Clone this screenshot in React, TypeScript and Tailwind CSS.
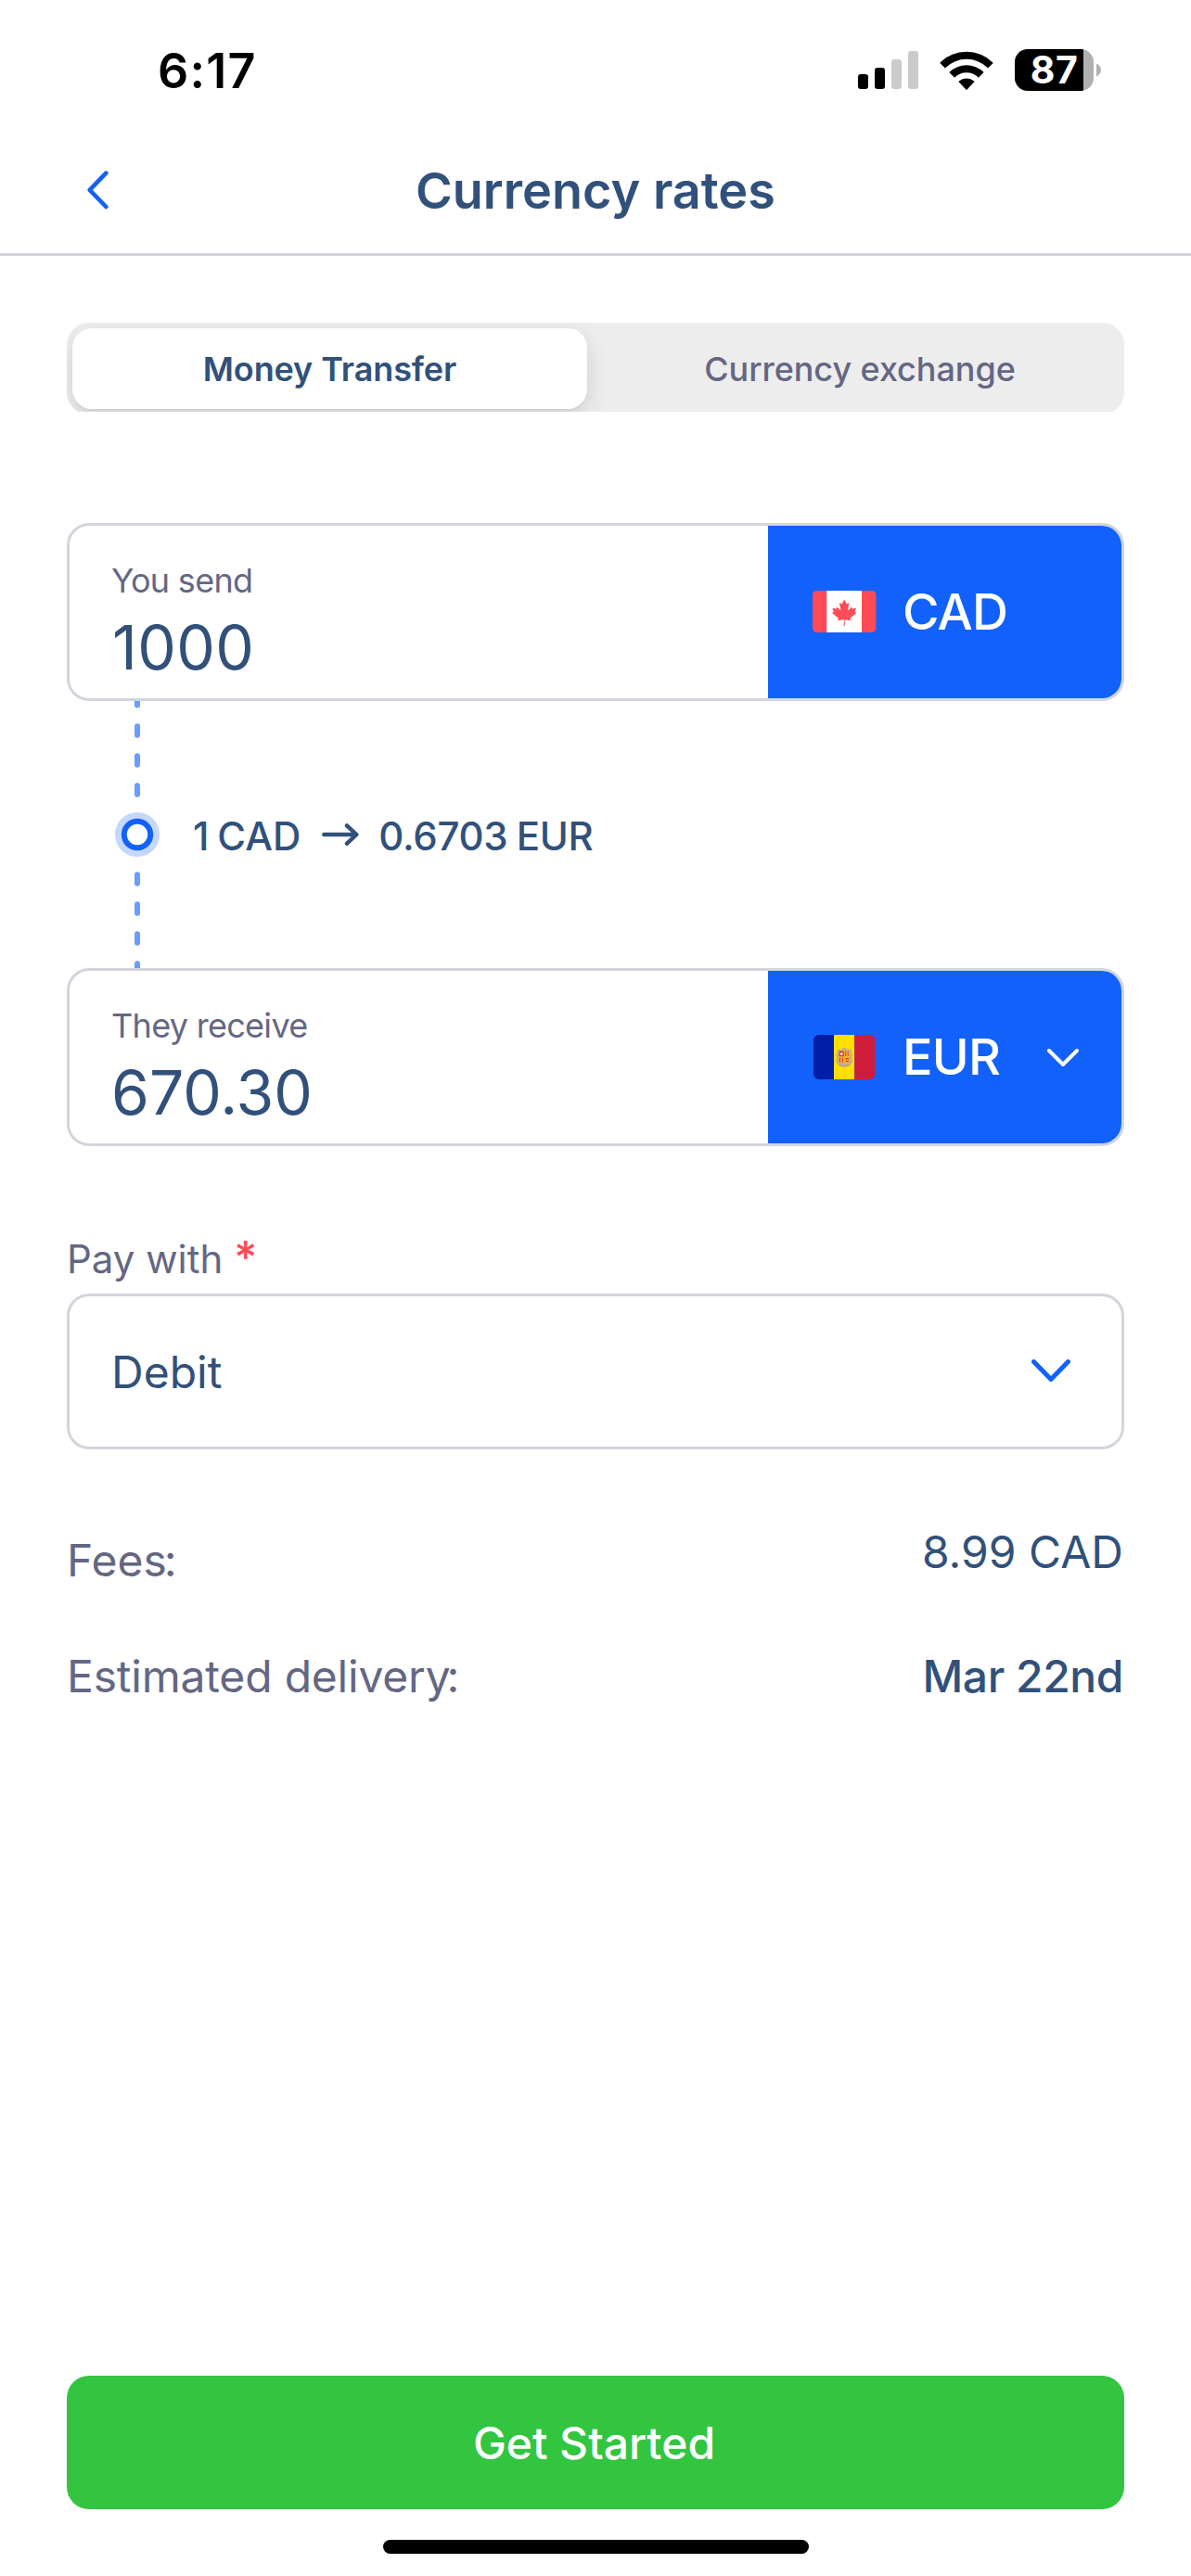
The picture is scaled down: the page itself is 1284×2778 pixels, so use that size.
import type { ReactNode } from "react";

function SignalIcon() {
  return (
    <svg width="65" height="41" viewBox="0 0 65 41">
      <rect x="0" y="25" width="11" height="16" rx="3" fill="#000" />
      <rect x="18" y="18" width="11" height="23" rx="3" fill="#000" />
      <rect x="36" y="9" width="11" height="32" rx="3" fill="#cbcbcb" />
      <rect x="54" y="0" width="11" height="41" rx="3" fill="#cbcbcb" />
    </svg>
  );
}

function WifiIcon() {
  return (
    <svg width="58" height="42" viewBox="0 0 58 42">
      <path d="M0.6 12.4 A40.5 40.5 0 0 1 57.4 12.4 Q57.7 12.8 57.4 13.2 L52.6 18 Q52.1 18.4 51.6 18 A32.5 32.5 0 0 0 6.4 18 Q5.9 18.4 5.4 18 L0.6 13.2 Q0.3 12.8 0.6 12.4Z" />
      <path d="M10.8 22.6 A26.4 26.4 0 0 1 47.2 22.6 Q47.6 23 47.2 23.4 L42.4 28.2 Q41.9 28.6 41.4 28.2 A18 18 0 0 0 16.6 28.2 Q16.1 28.6 15.6 28.2 L10.8 23.4 Q10.4 23 10.8 22.6Z" />
      <path d="M20.8 32.6 A12.3 12.3 0 0 1 37.2 32.6 Q37.7 33.1 37.2 33.6 L29.6 41.4 Q29 41.9 28.4 41.4 L20.8 33.6 Q20.3 33.1 20.8 32.6Z" />
    </svg>
  );
}

function Battery() {
  return (
    <div className="flex items-center gap-[3px]">
      <div className="flex h-[45px] w-[85px] items-center justify-center rounded-[14px] bg-[linear-gradient(to_right,#000_74px,#b1b1b1_74px)] text-[41px] leading-[45px] font-bold tracking-[0.5px] text-white">
        87
      </div>
      <svg width="5" height="15" viewBox="0 0 5 15">
        <path d="M0 0.5 C3 2 5 4.5 5 7.5 C5 10.5 3 13 0 14.5Z" fill="#b1b1b1" />
      </svg>
    </div>
  );
}

function CanadaFlag() {
  return (
    <svg width="69" height="45" viewBox="0 0 69 45" className="mb-[2px]">
      <path d="M4.5 0H15.3V45H4.5A4.5 4.5 0 0 1 0 40.5V4.5A4.5 4.5 0 0 1 4.5 0Z" fill="#ff4b55" />
      <rect x="15.3" width="37.8" height="45" fill="#fff" />
      <path d="M53 0H63.9A4.5 4.5 0 0 1 68.4 4.5V40.5A4.5 4.5 0 0 1 63.9 45H53Z" fill="#ff4b55" />
      <path
        transform="translate(34.2 23.6) scale(0.0071)"
        fill="#ff4b55"
        d="m-90 2030 45-863a95 95 0 0 0-111-98l-859 151 116-320a65 65 0 0 0-20-73l-941-762 212-99a65 65 0 0 0 34-79l-186-572 542 115a65 65 0 0 0 73-38l105-247 423 454a65 65 0 0 0 111-57l-204-1052 327 189a65 65 0 0 0 91-27l332-652 332 652a65 65 0 0 0 91 27l327-189-204 1052a65 65 0 0 0 111 57l423-454 105 247a65 65 0 0 0 73 38l542-115-186 572a65 65 0 0 0 34 79l212 99-941 762a65 65 0 0 0-20 73l116 320-859-151a95 95 0 0 0-111 98l45 863z"
      />
    </svg>
  );
}

function AndorraFlag() {
  return (
    <svg width="69" height="48" viewBox="0 0 69 48">
      <path d="M7 0H23V48H7A6 6 0 0 1 1 42V6A6 6 0 0 1 7 0Z" fill="#001ea6" />
      <rect x="23" width="22.3" height="48" fill="#ffdf00" />
      <path d="M45.2 0H61.3A6 6 0 0 1 67.3 6V42A6 6 0 0 1 61.3 48H45.2Z" fill="#d01c3b" />
      <path
        d="M26 17 L29 15 L31 16.2 L32.2 14 H36.2 L37.4 16.2 L39.5 15 L42.4 17 L41.8 20 L43.4 22 L42.2 24.5 L43.6 29 L41.6 31 L40 33.6 Q34.2 36.4 28.5 33.6 L26.8 31 L25 29 L26.2 24.5 L25 22 L26.6 20Z"
        fill="#c7b37f"
      />
      <path d="M28.6 17.6H39.8V28.6Q39.8 30 38.2 30H30.2Q28.6 30 28.6 28.6Z" fill="#f7b32a" />
      <rect x="28.6" y="17.6" width="5.2" height="5.6" fill="#d8323c" />
      <circle cx="31.2" cy="20.6" r="1.6" fill="#f4dfe8" />
      <path d="M35.6 17.6V23M38.2 17.6V23M29.6 24.6V29.8M32.4 24.6V30" stroke="#dd4a30" strokeWidth="1.1" />
      <path d="M35.4 25.6H39.2M35.8 28.4H39" stroke="#d8323c" strokeWidth="1.3" />
      <path d="M28.6 32.4Q34.2 34.4 39.9 32.4" fill="none" stroke="#a8946a" strokeWidth="0.7" />
    </svg>
  );
}

function Chevron({ width, height, stroke, className }: { width: number; height: number; stroke: number; className: string }) {
  const h = stroke / 2;
  return (
    <svg width={width} height={height} viewBox={`0 0 ${width} ${height}`} className={className}>
      <path
        d={`M${h} ${h} L${width / 2} ${height - h} L${width - h} ${h}`}
        fill="none"
        stroke="currentColor"
        strokeWidth={stroke}
        strokeLinecap="round"
        strokeLinejoin="round"
      />
    </svg>
  );
}

const DASHES = [-8, 24.3, 56.3, 88.3, 184.3, 216.3, 248.3, 280.3];

function Connector() {
  return (
    <svg width="48" height="288" viewBox="0 0 48 288">
      {DASHES.map((y) => (
        <rect key={y} x="21" y={y} width="6" height="15.4" rx="3" fill="#6b9dfc" />
      ))}
      <circle cx="24" cy="144" r="24" fill="#c4d7fd" />
      <circle cx="24" cy="144" r="14.2" fill="#fff" stroke="#1261fa" strokeWidth="6" />
    </svg>
  );
}

function AmountCard({ label, amount, flag, code, chevron }: { label: string; amount: ReactNode; flag: ReactNode; code: string; chevron?: boolean }) {
  return (
    <section className="flex h-[192px] overflow-hidden rounded-3xl border-[3px] border-[#d2d5dc]">
      <div className="flex flex-1 flex-col gap-[10px] pt-[37px] pl-[45px]">
        <span className="text-[36px] leading-[44px] tracking-[-0.7px] text-[#646783]">{label}</span>
        <span className="text-[66px] leading-[80px] text-[#31517b]">{amount}</span>
      </div>
      <button className="flex w-[381px] items-center bg-[#1261fa] pl-12 text-white">
        {flag}
        <span className="ml-7 text-[54px] leading-[66px] font-medium tracking-[-0.8px]">{code}</span>
        {chevron && <Chevron width={34} height={19} stroke={4} className="mr-[46px] ml-auto" />}
      </button>
    </section>
  );
}

export default function App() {
  return (
    <div className="flex h-[2778px] w-[1284px] flex-col bg-white font-['Inter',sans-serif]">
      <div className="flex h-[138px] items-start justify-between pr-[97px] pl-[170px]">
        <span className="pt-[50px] text-[52px] leading-[54px] font-semibold tracking-[1.2px] text-black">6:17</span>
        <div className="mt-[53px] flex h-[45px] items-center">
          <SignalIcon />
          <div className="mx-[23px]">
            <WifiIcon />
          </div>
          <Battery />
        </div>
      </div>

      <header className="grid h-[138px] grid-cols-[1fr_auto_1fr] items-center border-b-[3px] border-[#d2d5dc]">
        <button className="mb-[2px] ml-[94px] w-[23px] text-[#1261fa]">
          <svg width="23" height="42" viewBox="0 0 23 42">
            <path d="M20.3 2.7L2.7 20.8L20.3 39" fill="none" stroke="currentColor" strokeWidth="4.6" strokeLinecap="round" strokeLinejoin="round" />
          </svg>
        </button>
        <h1 className="text-[54px] leading-[66px] font-semibold text-[#31517b]">Currency rates</h1>
      </header>

      <main className="flex flex-1 flex-col px-[72px] pt-[72px]">
        <div className="h-24 overflow-hidden">
          <div className="flex h-[99px] overflow-hidden rounded-3xl bg-[#ededed] text-[36px]">
            <div className="flex w-1/2 pt-[6px] pl-[6px]">
              <button className="h-[87px] w-[555px] rounded-[21px] bg-white font-semibold tracking-[-0.1px] text-[#31517b] shadow-[0_9px_24px_rgba(0,0,0,0.12),0_3px_3px_rgba(0,0,0,0.03)]">
                Money Transfer
              </button>
            </div>
            <button className="w-1/2 font-medium tracking-[-0.06px] text-[#646783]">Currency exchange</button>
          </div>
        </div>

        <div className="mt-[120px]">
          <AmountCard label="You send" amount={<span className="pl-px tracking-[0.4px]">1000</span>} flag={<CanadaFlag />} code="CAD" />
          <div className="flex h-[288px] items-center pl-[52px]">
            <Connector />
            <div className="ml-9 flex items-center text-[42px] font-medium text-[#31517b]">
              <span className="pt-[3px] leading-[50px] [word-spacing:-2.3px]">1 CAD</span>
              <svg width="40" height="24" viewBox="0 0 40 24" className="mr-[21px] ml-[23px]">
                <path d="M2.3 12H37M27 2.3L37.4 12L27 21.7" fill="none" stroke="currentColor" strokeWidth="4.4" strokeLinecap="round" strokeLinejoin="round" />
              </svg>
              <span className="pt-[3px] leading-[50px] tracking-[-0.3px] [word-spacing:-1.5px]">0.6703 EUR</span>
            </div>
          </div>
          <AmountCard label="They receive" amount="670.30" flag={<AndorraFlag />} code="EUR" chevron />
        </div>

        <label className="mt-[97px] block h-[50px] text-[42px] leading-[50px] text-[#646783]">
          Pay with <span className="text-[48px] leading-[0] font-medium text-[#ff4b55]">*</span>
        </label>
        <button className="mt-3 flex h-[168px] items-center justify-between rounded-3xl border-[3px] border-[#d2d5dc] pr-[55px] pl-[45px] text-[48px] text-[#31517b]">
          <span className="pt-[2px]">Debit</span>
          <Chevron width={42} height={24} stroke={5} className="mb-[3px] text-[#1261fa]" />
        </button>

        <div className="mt-[90px] flex justify-between text-[48px]">
          <span className="leading-[60px] text-[#646783]">
            Fees<span className="-ml-[3px]">:</span>
          </span>
          <span className="pr-px leading-[42px] text-[#31517b]">8.99 CAD</span>
        </div>
        <div className="mt-[65px] flex justify-between text-[48px] leading-[60px]">
          <span className="tracking-[-0.2px] text-[#646783]">
            Estimated delivery<span className="-ml-1">:</span>
          </span>
          <span className="pr-px font-medium tracking-[-0.45px] text-[#31517b]">Mar 22nd</span>
        </div>

        <button className="mt-auto h-36 w-full rounded-3xl bg-[#33c540] pt-px pr-[3px] text-[48px] font-medium text-white">Get Started</button>
        <div className="mx-auto mt-[33px] mb-6 h-[15px] w-[459px] rounded-full bg-black" />
      </main>
    </div>
  );
}
